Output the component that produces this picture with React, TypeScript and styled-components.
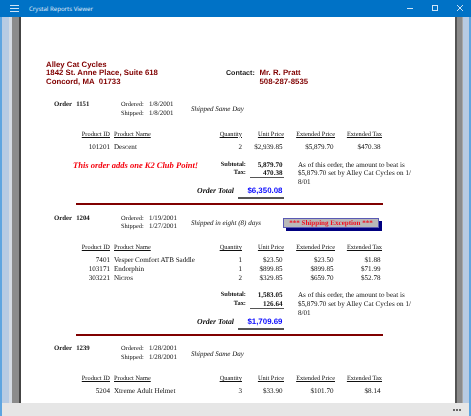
import styled, { createGlobalStyle } from "styled-components";

interface LineItem {
    id: string;
    name: string;
    qty: number;
    unit: string;
    ext: string;
    tax: string;
}

interface Order {
    number: string;
    ordered: string;
    shipped: string;
    via: string;
    exception?: boolean;
    note?: string;
    items: LineItem[];
    subtotal?: string;
    taxTotal?: string;
    total?: string;
}

const orders: Order[] = [
    {
        number: "1151",
        ordered: "1/8/2001",
        shipped: "1/8/2001",
        via: "Shipped Same Day",
        note: "This order adds one K2 Club Point!",
        items: [{ id: "101201", name: "Descent", qty: 2, unit: "$2,939.85", ext: "$5,879.70", tax: "$470.38" }],
        subtotal: "5,879.70",
        taxTotal: "470.38",
        total: "$6,350.08",
    },
    {
        number: "1204",
        ordered: "1/19/2001",
        shipped: "1/27/2001",
        via: "Shipped in eight (8) days",
        exception: true,
        items: [
            { id: "7401", name: "Vesper Comfort ATB Saddle", qty: 1, unit: "$23.50", ext: "$23.50", tax: "$1.88" },
            { id: "103171", name: "Endorphin", qty: 1, unit: "$899.85", ext: "$899.85", tax: "$71.99" },
            { id: "303221", name: "Nicros", qty: 2, unit: "$329.85", ext: "$659.70", tax: "$52.78" },
        ],
        subtotal: "1,583.05",
        taxTotal: "126.64",
        total: "$1,709.69",
    },
    {
        number: "1239",
        ordered: "1/28/2001",
        shipped: "1/28/2001",
        via: "Shipped Same Day",
        items: [{ id: "5204", name: "Xtreme Adult Helmet", qty: 3, unit: "$33.90", ext: "$101.70", tax: "$8.14" }],
    },
];

function App() {
    return (
        <>
            <GlobalStyle />
            <Window>
                <TitleBar>
                    <MenuButton aria-label="Menu">
                        <svg width="9" height="7" viewBox="0 0 9 7" fill="#cfe4f6">
                            <rect y="0" width="9" height="1" />
                            <rect y="3" width="9" height="1" />
                            <rect y="6" width="9" height="1" />
                        </svg>
                    </MenuButton>
                    <Title>Crystal Reports Viewer</Title>
                    <WindowButtons>
                        <svg width="6" height="6" viewBox="0 0 6 6" stroke="#cfe4f6" fill="none">
                            <path d="M0 3.5H6" />
                        </svg>
                        <svg width="6" height="6" viewBox="0 0 6 6" stroke="#cfe4f6" fill="none">
                            <rect x="0.5" y="0.5" width="5" height="5" />
                        </svg>
                        <svg width="6" height="6" viewBox="0 0 6 6" stroke="#cfe4f6" fill="none">
                            <path d="M0 0L6 6M6 0L0 6" />
                        </svg>
                    </WindowButtons>
                </TitleBar>

                <Body>
                    <LeftRail />
                    <Page>
                        <CompanyHeader>
                            <Company>
                                Alley Cat Cycles
                                <br />
                                1842 St. Anne Place, Suite 618
                                <br />
                                Concord, MA&nbsp; 01733
                            </Company>
                            <ContactLabel>Contact:</ContactLabel>
                            <Company>
                                Mr. R. Pratt
                                <br />
                                508-287-8535
                            </Company>
                        </CompanyHeader>

                        {orders.map(order => (
                            <OrderBlock key={order.number}>
                                <OrderMeta>
                                    <OrderNumber>
                                        <span>Order</span>
                                        <span>{order.number}</span>
                                    </OrderNumber>
                                    <DateLabel>Ordered:</DateLabel>
                                    <DateValue>{order.ordered}</DateValue>
                                    <DateLabel>Shipped:</DateLabel>
                                    <DateValue>{order.shipped}</DateValue>
                                    <Via>{order.via}</Via>
                                    {order.exception && <ExceptionBox>*** Shipping Exception ***</ExceptionBox>}
                                </OrderMeta>

                                <ItemGrid>
                                    <HeadCell $align="right">Product ID</HeadCell>
                                    <HeadCell $indent>Product Name</HeadCell>
                                    <HeadCell $align="right">Quantity</HeadCell>
                                    <HeadCell $align="right">Unit Price</HeadCell>
                                    <HeadCell $align="right">Extended Price</HeadCell>
                                    <HeadCell $align="right">Extended Tax</HeadCell>
                                    {order.items.map(item => (
                                        <ItemRow key={item.id}>
                                            <Cell $align="right">{item.id}</Cell>
                                            <Cell $indent>{item.name}</Cell>
                                            <Cell $align="right">{item.qty}</Cell>
                                            <Cell $align="right" $pad>{item.unit}</Cell>
                                            <Cell $align="right" $pad>{item.ext}</Cell>
                                            <Cell $align="right" $pad>{item.tax}</Cell>
                                        </ItemRow>
                                    ))}
                                </ItemGrid>

                                {order.total && (
                                    <>
                                        <Summary>
                                            <ClubNote>{order.note}</ClubNote>
                                            <SummaryLabel>Subtotal:</SummaryLabel>
                                            <SummaryValue>{order.subtotal}</SummaryValue>
                                            <BeatNote>
                                                As of this order, the amount to beat is
                                                <br />
                                                $5,879.70 set by Alley Cat Cycles on 1/
                                                <br />
                                                8/01
                                            </BeatNote>
                                            <SummaryLabel>Tax:</SummaryLabel>
                                            <TaxValue>{order.taxTotal}</TaxValue>
                                            <TotalLabel>Order Total</TotalLabel>
                                            <TotalValue>{order.total}</TotalValue>
                                        </Summary>
                                        <Divider />
                                    </>
                                )}
                            </OrderBlock>
                        ))}
                    </Page>
                    <RightRail />
                </Body>

                <StatusBar>
                    <Dots>
                        <i />
                        <i />
                        <i />
                    </Dots>
                </StatusBar>
            </Window>
        </>
    );
}

export default App;

const GlobalStyle = createGlobalStyle`
    html, body {
        margin: 0;
        padding: 0;
        background: #fff;
        text-rendering: geometricPrecision;
    }
`;

const Window = styled.div`
    width: 471px;
    height: 416px;
    display: flex;
    flex-direction: column;
    overflow: hidden;
`;

const TitleBar = styled.header`
    height: 16.5px;
    flex: none;
    display: flex;
    align-items: center;
    background: #0072c6;
    color: #e4f0fa;
`;

const MenuButton = styled.div`
    width: 29px;
    padding-left: 10px;
    box-sizing: border-box;
    display: flex;
`;

const Title = styled.div`
    font-family: "Open Sans", "Liberation Sans", sans-serif;
    font-size: 6.1px;
`;

const WindowButtons = styled.div`
    margin-left: auto;
    padding-right: 8px;
    display: flex;
    gap: 19px;
`;

const Body = styled.div`
    flex: 1;
    min-height: 0;
    display: flex;
`;

const LeftRail = styled.div`
    width: 20.5px;
    flex: none;
    background: linear-gradient(
        to right,
        #5ea5e0 0 2px,
        #b7cbe3 2px 9px,
        #d5dbe3 9px 12px,
        #8b8b8b 12px 19px,
        #444 19px 20.5px
    );
`;

const RightRail = styled.div`
    width: 16.5px;
    flex: none;
    background: linear-gradient(
        to right,
        #555 0 2.5px,
        #8b8b8b 2.5px 7px,
        #a8a8a8 7px 8.5px,
        #b7cbe3 8.5px 14.5px,
        #5ea5e0 14.5px 16.5px
    );
`;

const Page = styled.main`
    flex: 1;
    min-width: 0;
    padding-top: 44px;
    overflow: hidden;
    background: #fff;
    color: #111;
    font-family: "Liberation Serif", serif;
    font-size: 7.1px;
    line-height: 8.6px;
    filter: blur(0.2px);
`;

const CompanyHeader = styled.section`
    display: grid;
    grid-template-columns: 180px 29px auto;
    padding-left: 25.5px;
    font-family: "Liberation Sans", sans-serif;
    font-weight: 700;
    font-size: 7.8px;
    line-height: 8.5px;
`;

const Company = styled.div`
    color: #800000;
    white-space: nowrap;

    &:last-child {
        margin-top: 8.5px;
        padding-left: 4.5px;
    }
`;

const ContactLabel = styled.div`
    margin-top: 8.5px;
    color: #222;
    font-size: 7.1px;
    white-space: nowrap;
`;

const OrderBlock = styled.section`
    padding-top: 15px;

    & + & {
        padding-top: 9.7px;
    }
`;

const OrderMeta = styled.div`
    display: grid;
    grid-template-columns: 67px 28px 42px 92px 96px;
    grid-auto-rows: 8.6px;
    margin-left: 33.5px;
    white-space: nowrap;
`;

const OrderNumber = styled.div`
    grid-column: 1;
    grid-row: 1 / span 2;
    display: flex;
    gap: 4px;
    font-weight: 700;
    font-size: 6.8px;
`;

const DateLabel = styled.span`
    grid-column: 2;
    font-size: 6.4px;
`;

const DateValue = styled.span`
    grid-column: 3;
    font-size: 6.9px;
`;

const Via = styled.div`
    grid-column: 4;
    grid-row: 1 / span 2;
    align-self: center;
    font-style: italic;
    font-size: 7px;
`;

const ExceptionBox = styled.div`
    grid-column: 5;
    grid-row: 1 / span 2;
    align-self: center;
    height: 10.5px;
    box-sizing: border-box;
    border: 1px solid #5a5ab4;
    background: #b9b9b9;
    box-shadow: 3px 3px 0 #000080;
    color: #f01020;
    font-weight: 700;
    font-size: 7.05px;
    line-height: 8px;
    text-align: center;
`;

const columns = "34px 90px 42px 42px 51px 47px";

const ItemGrid = styled.div`
    display: grid;
    grid-template-columns: ${columns};
    grid-auto-rows: auto;
    margin: 12.5px 0 0 55.5px;
    white-space: nowrap;
`;

const HeadCell = styled.div<{ $align?: string; $indent?: boolean }>`
    height: 8.6px;
    margin-bottom: 3.5px;
    padding-left: ${p => (p.$indent ? "4px" : 0)};
    font-size: 6.4px;
    text-align: ${p => p.$align ?? "left"};
    text-decoration: underline;
`;

const ItemRow = styled.div`
    grid-column: 1 / -1;
    display: grid;
    grid-template-columns: ${columns};
`;

const Cell = styled.div<{ $align?: string; $indent?: boolean; $pad?: boolean }>`
    padding-left: ${p => (p.$indent ? "4px" : 0)};
    padding-right: ${p => (p.$pad ? "1.5px" : 0)};
    text-align: ${p => p.$align ?? "left"};
`;

const Summary = styled.div`
    display: grid;
    grid-template-columns: 130px 32px 8px 38px 1fr;
    grid-template-rows: 8.6px 8.6px 9.6px auto;
    margin: 9.2px 0 0 55.5px;
    white-space: nowrap;
`;

const ClubNote = styled.div`
    grid-column: 1;
    grid-row: 1;
    margin-left: -3px;
    color: #f4000c;
    font-weight: 700;
    font-style: italic;
    font-size: 8.5px;
`;

const SummaryLabel = styled.div`
    grid-column: 2 / span 2;
    text-align: right;
    font-weight: 700;
    font-size: 6.4px;
`;

const SummaryValue = styled.div`
    grid-column: 4;
    text-align: right;
    padding-right: 1.5px;
    font-weight: 700;
`;

const TaxValue = styled(SummaryValue)`
    margin-left: 4px;
    height: 7.6px;
    border-bottom: 1px solid #555;
`;

const BeatNote = styled.div`
    grid-column: 5;
    grid-row: 1 / span 3;
    padding-left: 14px;
`;

const TotalLabel = styled.div`
    grid-column: 1 / span 2;
    grid-row: 4;
    padding-right: 4px;
    text-align: right;
    font-weight: 700;
    font-style: italic;
    font-size: 7.75px;
`;

const TotalValue = styled.div`
    grid-column: 3 / span 2;
    grid-row: 4;
    padding: 0 1.5px 1px 0;
    border-bottom: 2px solid #555;
    text-align: right;
    color: #0a0aff;
    font-family: "Liberation Sans", sans-serif;
    font-weight: 700;
    font-size: 7.9px;
`;

const Divider = styled.hr`
    width: 307px;
    height: 2px;
    margin: 4px 0 0 55.5px;
    border: 0;
    background: #800000;
`;

const StatusBar = styled.footer`
    height: 13px;
    flex: none;
    display: flex;
    align-items: center;
    justify-content: flex-end;
    padding-right: 8px;
    border-left: 2px solid #5ea5e0;
    border-right: 2px solid #5ea5e0;
    background: #e6e6e6;
`;

const Dots = styled.div`
    display: flex;
    gap: 1px;

    i {
        width: 2px;
        height: 2px;
        background: #666;
    }
`;
